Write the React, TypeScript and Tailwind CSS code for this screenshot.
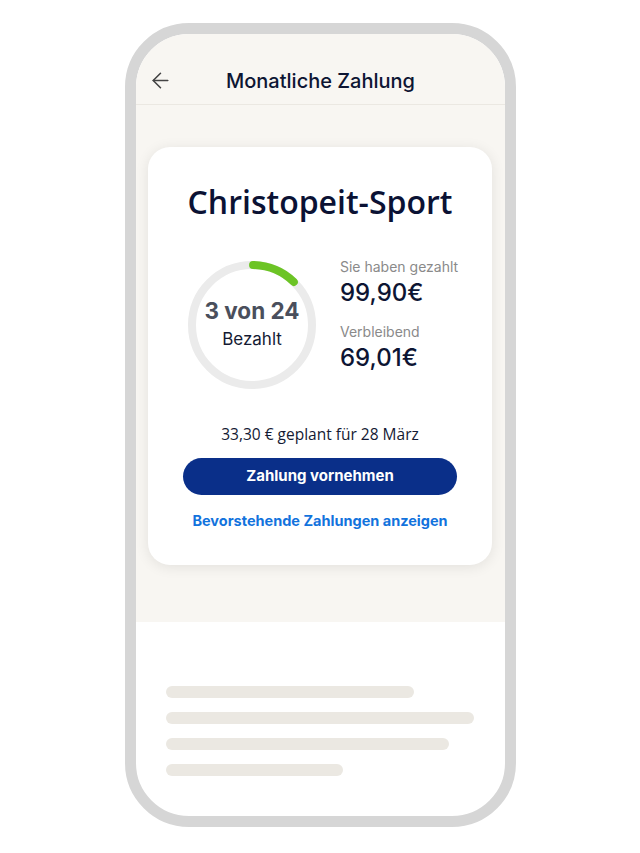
import { ArrowLeft } from "lucide-react";

const SKELETON = ["w-[248px]", "w-[308px]", "w-[283px]", "w-[177px]"];

function ProgressRing({ paid, total }: { paid: number; total: number }) {
  const r = 60;
  const c = 2 * Math.PI * r;
  const part = (paid / total) * c;
  return (
    <div className="relative w-[128px] h-[128px] shrink-0">
      <svg width="128" height="128" viewBox="0 0 128 128" className="absolute inset-0">
        <circle cx="64" cy="64" r={r} fill="none" stroke="#ebebeb" strokeWidth="8" />
        <circle
          cx="64"
          cy="64"
          r={r}
          fill="none"
          stroke="#6cc425"
          strokeWidth="8"
          strokeLinecap="round"
          strokeDasharray={`${part - 2} ${c}`}
          transform="rotate(-89 64 64)"
        />
      </svg>
      <div className="absolute inset-0 flex flex-col items-center justify-center pb-[4px]">
        <div className="text-[22.5px] leading-[28px] font-bold text-[#4a4f5c]">
          {paid} von {total}
        </div>
        <div className="text-[17px] leading-[22px] mt-[3px] text-[#141a33]">Bezahlt</div>
      </div>
    </div>
  );
}

export default function App() {
  return (
    <div className="w-[640px] h-[853px] bg-white pt-[23px] font-['Inter','Liberation_Sans',sans-serif]">
      <div className="ml-[125px] w-[391px] h-[804px] border-[11px] border-[#d6d6d6] rounded-[64px] overflow-hidden bg-white">
        {/* header */}
        <div className="h-[71px] bg-[#f8f6f2] border-b border-[#ebe8e2] relative flex justify-center pt-[35px]">
          <ArrowLeft className="absolute left-[12px] top-[34px] w-[25px] h-[25px] text-[#444] stroke-[1.5]" />
          <div className="text-[20px] leading-[24px] font-medium text-[#0d1533]">Monatliche Zahlung</div>
        </div>

        {/* beige area */}
        <div className="bg-[#f8f6f2] h-[517px] pt-[42px] px-[12px]">
          <div className="w-[344px] h-[418px] bg-white rounded-[22px] shadow-[0_2px_14px_rgba(0,0,0,0.09)] pt-[35px] flex flex-col items-center">
            <h1 className="font-['Open_Sans','Noto_Sans',sans-serif] font-semibold text-[32px] leading-[40px] text-[#0b1234]">
              Christopeit-Sport
            </h1>

            <div className="w-full flex pl-[40px] mt-[35px]">
              <div className="mt-[4px]">
                <ProgressRing paid={3} total={24} />
              </div>
              <div className="ml-[24px] flex flex-col">
                <div className="text-[14px] leading-[20px] text-[#8a8a8a]">Sie haben gezahlt</div>
                <div className="text-[24px] leading-[30px] font-medium text-[#0d1533] mt-[1px]">99,90€</div>
                <div className="text-[14px] leading-[20px] text-[#8a8a8a] mt-[14px]">Verbleibend</div>
                <div className="text-[24px] leading-[30px] font-medium text-[#0d1533] mt-[1px]">69,01€</div>
              </div>
            </div>

            <div className="mt-[35px] font-['Open_Sans','Noto_Sans',sans-serif] text-[15.5px] leading-[20px] text-[#141a33]">
              33,30 € geplant für 28 März
            </div>

            <button className="mt-[14px] w-[274px] h-[37px] rounded-full bg-[#0a2f89] text-white text-[15px] font-bold">
              Zahlung vornehmen
            </button>

            <a className="mt-[16px] text-[14.5px] leading-[20px] font-bold text-[#1273dd]">
              Bevorstehende Zahlungen anzeigen
            </a>
          </div>
        </div>

        {/* skeleton text */}
        <div className="pt-[64px] pl-[30px] flex flex-col gap-[14px]">
          {SKELETON.map((w) => (
            <div key={w} className={`${w} h-[12px] rounded-full bg-[#ebe8e2]`} />
          ))}
        </div>
      </div>
    </div>
  );
}
